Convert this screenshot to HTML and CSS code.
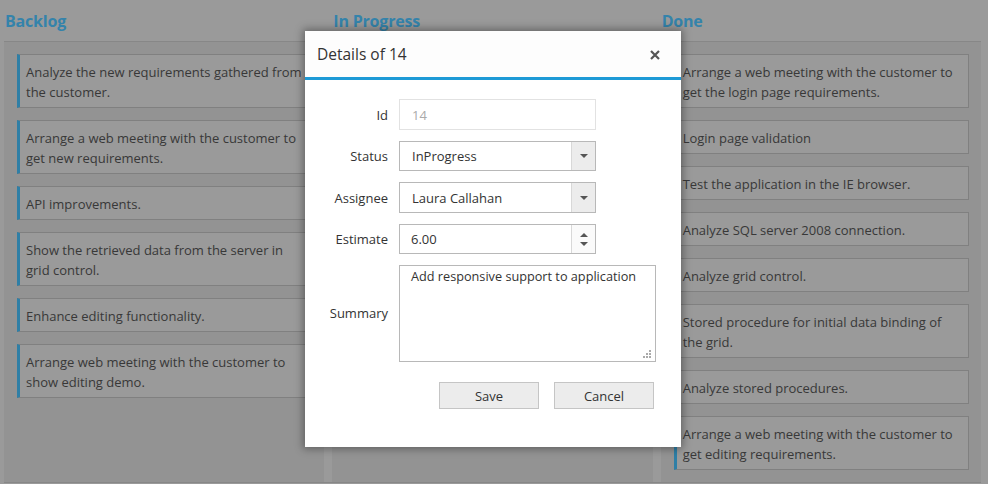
FILE: index.html
```html
<!DOCTYPE html>
<html>
<head>
<meta charset="utf-8">
<link rel="stylesheet" href="styles.css">
</head>
<body>
<div class="board">
  <div class="heads">
    <div class="head">Backlog</div>
    <div class="head">In Progress</div>
    <div class="head">Done</div>
  </div>
  <div class="cols">
    <div class="col">
      <div class="card">Analyze the new requirements gathered from the customer.</div>
      <div class="card">Arrange a web meeting with the customer to get new requirements.</div>
      <div class="card">API improvements.</div>
      <div class="card">Show the retrieved data from the server in grid control.</div>
      <div class="card">Enhance editing functionality.</div>
      <div class="card">Arrange web meeting with the customer to show editing demo.</div>
    </div>
    <div class="col"></div>
    <div class="col">
      <div class="card">Arrange a web meeting with the customer to get the login page requirements.</div>
      <div class="card">Login page validation</div>
      <div class="card">Test the application in the IE browser.</div>
      <div class="card">Analyze SQL server 2008 connection.</div>
      <div class="card">Analyze grid control.</div>
      <div class="card">Stored procedure for initial data binding of the grid.</div>
      <div class="card">Analyze stored procedures.</div>
      <div class="card">Arrange a web meeting with the customer to get editing requirements.</div>
    </div>
  </div>
</div>

<div class="dialog">
  <div class="dlg-head">
    <span class="dlg-title">Details of 14</span>
    <svg class="close" width="10" height="10" viewBox="0 0 10 10"><path d="M1 1 L9 9 M9 1 L1 9" stroke="#555" stroke-width="2.2" fill="none"/></svg>
  </div>
  <div class="dlg-body">
    <div class="form">
      <label class="lbl">Id</label>
      <div class="field id-field">14</div>

      <label class="lbl">Status</label>
      <div class="field combo"><span class="val">InProgress</span><span class="btn"><span class="tri-down"></span></span></div>

      <label class="lbl">Assignee</label>
      <div class="field combo"><span class="val">Laura Callahan</span><span class="btn"><span class="tri-down"></span></span></div>

      <label class="lbl">Estimate</label>
      <div class="field combo num"><span class="val">6.00</span><span class="btn spin"><span class="tri-up"></span><span class="tri-down"></span></span></div>

      <label class="lbl lbl-sum">Summary</label>
      <div class="area-wrap">
        <textarea class="area">Add responsive support to application</textarea>
        <svg class="grip" width="9" height="9" viewBox="0 0 9 9" fill="#aaa">
          <rect x="6" y="0" width="2" height="2"/>
          <rect x="3" y="3" width="2" height="2"/><rect x="6" y="3" width="2" height="2"/>
          <rect x="0" y="6" width="2" height="2"/><rect x="3" y="6" width="2" height="2"/><rect x="6" y="6" width="2" height="2"/>
        </svg>
      </div>
    </div>
    <div class="actions">
      <button class="b">Save</button>
      <button class="b">Cancel</button>
    </div>
  </div>
</div>
</body>
</html>
```

FILE: styles.css
```css
html, body {
  margin: 0;
  padding: 0;
}
body {
  width: 988px;
  height: 484px;
  overflow: hidden;
  background: #9a9a9a;
  font-family: "Open Sans", "Noto Sans", sans-serif;
  font-size: 13px;
  color: #383838;
  position: relative;
}
.board {
  padding: 0 7px 0 4px;
}
.heads {
  display: grid;
  grid-template-columns: 1fr 1fr 1fr;
  column-gap: 8px;
  height: 41px;
  border-bottom: 1px solid #878787;
  align-items: center;
}
.head {
  padding-left: 1px;
  font-size: 16px;
  font-weight: 700;
  color: #3483ab;
  letter-spacing: -0.2px;
}
.cols {
  display: grid;
  grid-template-columns: 1fr 1fr 1fr;
  column-gap: 8px;
  height: 440px;
  border-bottom: 1px solid #878787;
}
.col {
  background: #939393;
  padding: 12px 12px 0 13px;
  display: flex;
  flex-direction: column;
  gap: 12px;
}
.card {
  border: 1px solid #808080;
  border-left: 3px solid #2f7fa6;
  background: #9a9a9a;
  padding: 7px 5px 5px 6px;
  line-height: 20px;
}

.dialog {
  position: absolute;
  left: 305px;
  top: 31px;
  width: 376px;
  height: 416px;
  background: #fff;
  box-shadow: 0 0 8px 2px rgba(0, 0, 0, 0.35);
  display: flex;
  flex-direction: column;
}
.dlg-head {
  height: 46px;
  border-bottom: 3px solid #1d9ad6;
  display: flex;
  align-items: center;
  justify-content: space-between;
  padding: 0 21px 0 12px;
  background: #fdfdfd;
}
.dlg-title {
  font-size: 15.5px;
  color: #333;
}
.close {
  display: block;
  margin-top: 2px;
}
.dlg-body {
  padding: 19px 0 0 0;
  color: #333;
}
.form {
  display: grid;
  grid-template-columns: 83px 257px;
  grid-template-rows: 31px 30px 31px 30px 97px;
  column-gap: 11px;
  row-gap: 11px;
}
.lbl {
  text-align: right;
  align-self: center;
  font-size: 13px;
}
.lbl-sum {
  margin-top: -2px;
}
.field {
  width: 197px;
  box-sizing: border-box;
  border: 1px solid #b8b8b8;
  display: flex;
  align-items: center;
  font-size: 13px;
}
.id-field {
  border-color: #e2e2e2;
  color: #aaa;
  padding-left: 12px;
}
.combo .val {
  flex: 1;
  padding-left: 12px;
}
.num .val {
  padding-left: 11px;
}
.btn {
  width: 23px;
  align-self: stretch;
  background: #ececec;
  border-left: 1px solid #d8d8d8;
  display: flex;
  align-items: center;
  justify-content: center;
}
.spin {
  background: #fafafa;
  flex-direction: column;
  gap: 5px;
}
.tri-down, .tri-up {
  width: 0;
  height: 0;
  border-left: 4px solid transparent;
  border-right: 4px solid transparent;
}
.tri-down {
  border-top: 4px solid #555;
}
.tri-up {
  border-bottom: 4px solid #555;
}
.area-wrap {
  position: relative;
  width: 257px;
  height: 97px;
}
.area {
  box-sizing: border-box;
  width: 257px;
  height: 97px;
  border: 1px solid #b8b8b8;
  resize: none;
  margin: 0;
  padding: 1px 11px;
  font-family: "Open Sans", "Noto Sans", sans-serif;
  font-size: 12.7px;
  color: #333;
  line-height: 18px;
  display: block;
}
.grip {
  position: absolute;
  right: 4px;
  bottom: 3px;
}
.actions {
  display: flex;
  justify-content: flex-end;
  gap: 15px;
  padding: 20px 27px 0 0;
}
.b {
  width: 100px;
  height: 27px;
  background: #ececec;
  border: 1px solid #c5c5c5;
  font-family: "Open Sans", "Noto Sans", sans-serif;
  font-size: 13px;
  line-height: 24px;
  color: #333;
  padding: 0;
}
```
